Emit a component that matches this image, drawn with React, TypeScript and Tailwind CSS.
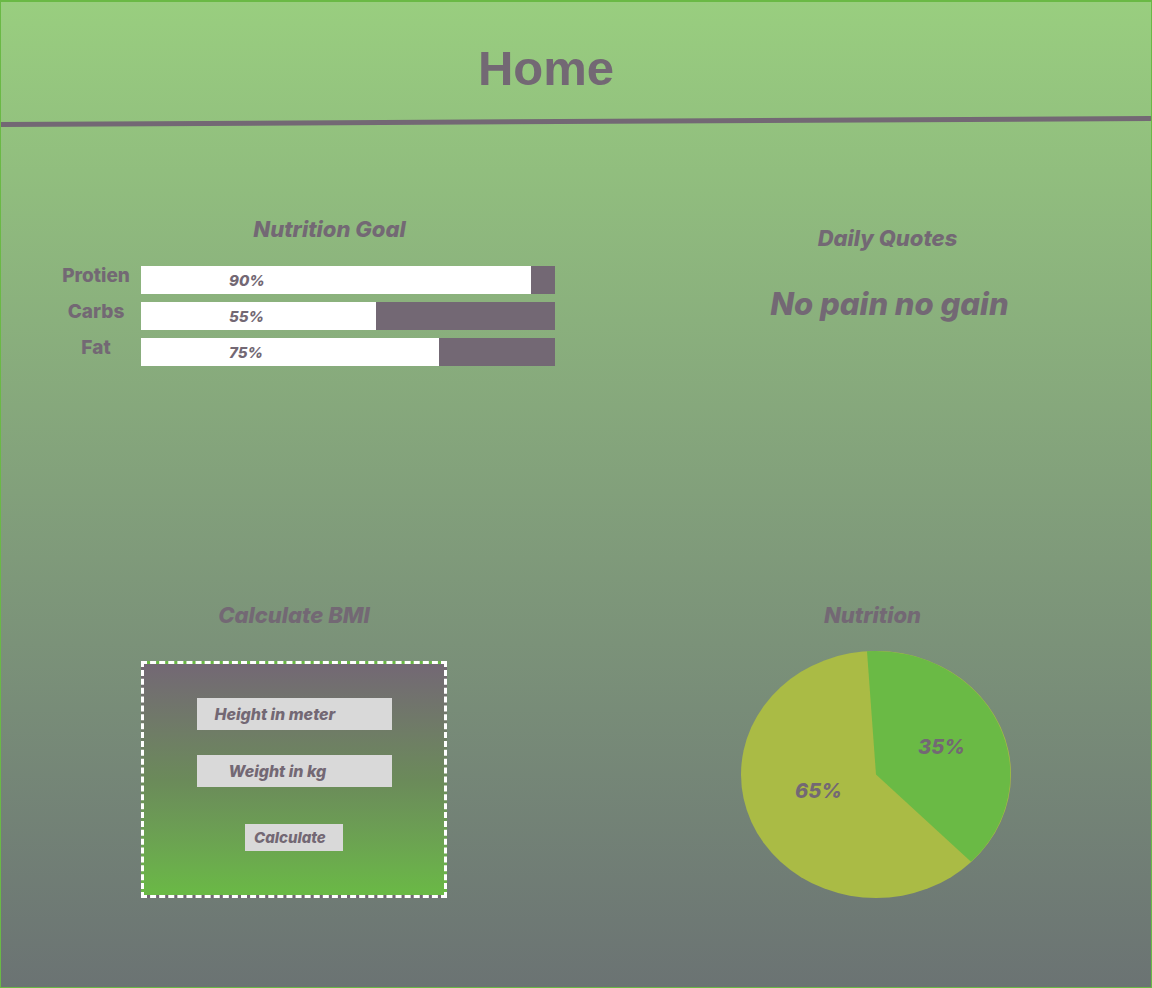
import React from "react";

const ink = "text-[#736874]";

function Bar({ label, pct, fill }: { label: string; pct: string; fill: number }) {
  return (
    <div className="flex items-start">
      <div className={`w-[72px] text-center text-[19px] leading-[20px] font-extrabold ${ink}`}>{label}</div>
      <div className="ml-[9px] flex h-[28px] w-[414px] bg-[#736874]">
        <div className="flex h-full items-center bg-white pl-[88px]" style={{ width: fill }}>
          <span className={`text-[15px] font-extrabold italic leading-none ${ink}`}>{pct}</span>
        </div>
      </div>
    </div>
  );
}

export default function App() {
  return (
    <div
      className="relative h-[988px] w-[1152px] overflow-hidden border border-t-2 border-[#6ab945] bg-gradient-to-b from-[#99ce7f] to-[#6b7373]"
      style={{ fontFamily: "Inter, 'Noto Sans', sans-serif" }}
    >
      {/* header */}
      <div className="h-[117px] pt-[42px] pr-[60px] text-center">
        <span
          className={`text-[49px] font-bold leading-none ${ink}`}
          style={{ fontFamily: "'Liberation Sans', Arial, sans-serif" }}
        >
          Home
        </span>
      </div>
      <div className="h-[5px] w-[1160px] -ml-[4px] origin-center -rotate-[0.3deg] bg-[#736874]" />

      {/* row 1 */}
      <div className="grid grid-cols-2 items-start">
        <div className="ml-[59px] mt-[93px] flex w-[497px] flex-col">
          <div className={`pl-[42px] text-center text-[22px] font-extrabold italic leading-[24px] ${ink}`}>
            Nutrition Goal
          </div>
          <div className="mt-[25px] flex flex-col gap-[8px]">
            <Bar label="Protien" pct="90%" fill={390} />
            <Bar label="Carbs" pct="55%" fill={235} />
            <Bar label="Fat" pct="75%" fill={298} />
          </div>
        </div>
        <div className="mt-[102px] flex flex-col items-center pl-[48px]">
          <div className={`text-[22px] font-extrabold italic leading-[24px] ${ink}`}>Daily Quotes</div>
          <div className={`mt-[36px] pl-[4px] text-[31px] font-extrabold italic leading-[36px] ${ink}`}>No pain no gain</div>
        </div>
      </div>

      {/* row 2 */}
      <div className="mt-[237px] grid grid-cols-2 items-start">
        <div className="ml-[140px] flex w-[306px] flex-col">
          <div className={`text-center text-[22px] font-extrabold italic leading-[24px] ${ink}`}>Calculate BMI</div>
          <div className="mt-[34px] flex h-[237px] w-[306px] flex-col items-center border-[3px] border-dashed border-white bg-gradient-to-b from-[#736874] via-[#6b8a5a] to-[#6ab945] pt-[34px]">
            <div className="flex h-[32px] w-[195px] items-center bg-[#d9d9d9] pl-[18px]">
              <span className={`text-[16px] font-extrabold italic leading-none ${ink}`}>Height in meter</span>
            </div>
            <div className="mt-[25px] flex h-[32px] w-[195px] items-center bg-[#d9d9d9] pl-[32px]">
              <span className={`text-[16px] font-extrabold italic leading-none ${ink}`}>Weight in kg</span>
            </div>
            <div className="mt-[37px] flex h-[27px] w-[98px] items-center bg-[#d9d9d9] pl-[9px]">
              <span className={`text-[15px] font-extrabold italic leading-none ${ink}`}>Calculate</span>
            </div>
          </div>
        </div>
        <div className="flex flex-col">
          <div className={`pl-[18px] text-center text-[22px] font-extrabold italic leading-[24px] ${ink}`}>Nutrition</div>
          <svg className="ml-[165px] mt-[24px]" width="271" height="248" viewBox="0 0 271 248">
            <ellipse cx="135" cy="123.5" rx="135" ry="123.5" fill="#aabb45" />
            <path d="M135 123.5 L126 0.3 A135 123.5 0 0 1 230 210.7 Z" fill="#6aba45" />
            <text
              x="54"
              y="147"
              fill="#736874"
              fontSize="20"
              fontWeight="800"
              fontStyle="italic"
              fontFamily="Inter, sans-serif"
            >
              65%
            </text>
            <text
              x="177"
              y="103"
              fill="#736874"
              fontSize="20"
              fontWeight="800"
              fontStyle="italic"
              fontFamily="Inter, sans-serif"
            >
              35%
            </text>
          </svg>
        </div>
      </div>
    </div>
  );
}
